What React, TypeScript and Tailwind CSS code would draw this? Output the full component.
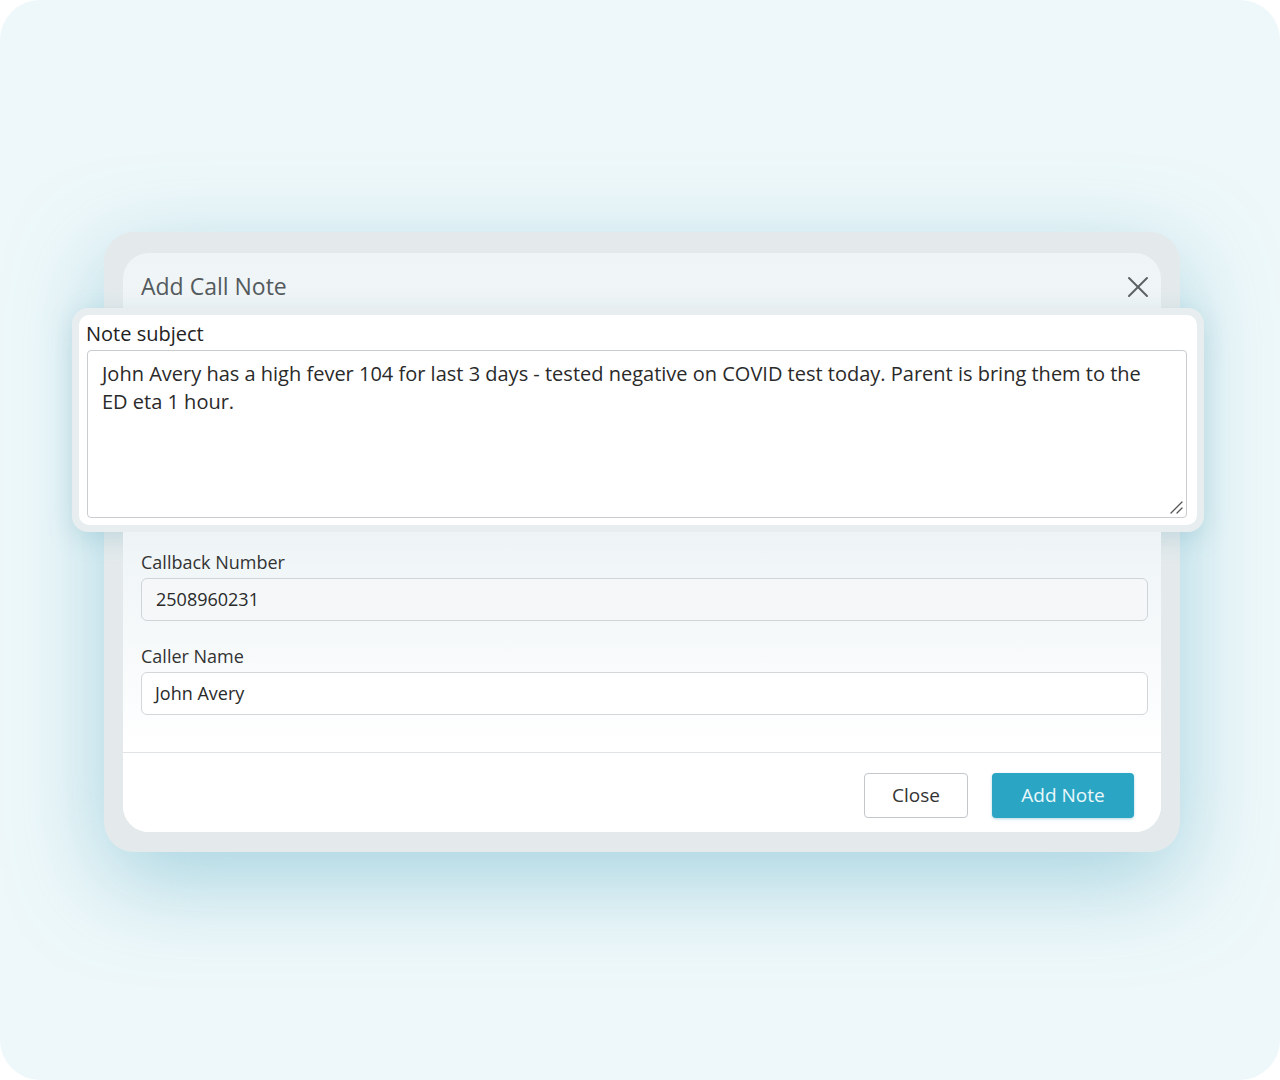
import React from 'react';

const font = { fontFamily: '"Open Sans", "Noto Sans", sans-serif' };

export default function App() {
  return (
    <div className="w-[1280px] h-[1080px] bg-white" style={font}>
      <div className="w-full h-full rounded-[40px] bg-[#eef8fa] pt-[232px] pl-[104px] overflow-hidden">
        {/* Outer frame with glow */}
        <div className="w-[1076px] rounded-[30px] bg-[#e4eaec] pt-[21px] px-[19px] pb-[20px] shadow-[0_28px_90px_rgba(95,175,200,0.5)]">
          {/* Modal */}
          <div className="rounded-[26px] bg-gradient-to-b from-[#eff4f6] via-[#f7fafb] to-white">
            {/* Header */}
            <div className="h-[55px] pt-[16px] pl-[18px] pr-[11px] flex items-start justify-between">
              <h2 className="text-[23px] leading-[34px] text-[#545a5d]">Add Call Note</h2>
              <button className="mt-[6px] w-[24px] h-[24px] flex items-center justify-center text-[#5b6063]">
                <svg width="22" height="22" viewBox="0 0 22 22" fill="none" stroke="currentColor" strokeWidth="2" strokeLinecap="round">
                  <path d="M2 2 L20 20" />
                  <path d="M20 2 L2 20" />
                </svg>
              </button>
            </div>

            {/* Popped-out note subject */}
            <div className="ml-[-51px] mr-[-43px] rounded-[16px] bg-[#e8eef0] p-[7px] shadow-[0_6px_24px_rgba(90,160,180,0.25)]">
              <div className="rounded-[10px] bg-white pl-[7px] pr-[10px] pt-[5px] pb-[7px]">
                <label className="block text-[20px] leading-[28px] text-[#222]">Note subject</label>
                <div className="relative mt-[2px] ml-[1px] h-[168px] rounded-[4px] border border-[#c9cdd0] px-[14px] pt-[9px] text-[20px] leading-[28px] text-[#2a2a2a]">
                  <div>John Avery has a high fever 104 for last 3 days - tested negative on COVID test today. Parent is bring them to the</div>
                  <div>ED eta 1 hour.</div>
                  <svg className="absolute right-[3px] bottom-[3px]" width="14" height="14" viewBox="0 0 14 14" stroke="#555" strokeWidth="1.3" strokeLinecap="round">
                    <path d="M2 13 L13 2" />
                    <path d="M8 13 L13 8" />
                  </svg>
                </div>
              </div>
            </div>

            {/* Fields */}
            <div className="pl-[18px] pr-[13px] pt-[18px] pb-[37px] bg-gradient-to-b from-[#eef4f6] to-white">
              <label className="block text-[18px] leading-[24px] text-[#333]">Callback Number</label>
              <div className="mt-[4px] h-[43px] rounded-[6px] border border-[#cfd4d7] bg-[#f5f7f8] px-[14px] flex items-center text-[18px] text-[#2a2a2a]">
                2508960231
              </div>
              <label className="block mt-[23px] text-[18px] leading-[24px] text-[#333]">Caller Name</label>
              <div className="mt-[4px] h-[43px] rounded-[6px] border border-[#d3d7da] bg-white px-[13px] flex items-center text-[18px] text-[#2a2a2a]">
                John Avery
              </div>
            </div>

            {/* Footer */}
            <div className="border-t border-[#dfe3e5] bg-white rounded-b-[26px] pt-[20px] pb-[14px] pr-[27px] flex justify-end gap-[24px]">
              <button className="w-[104px] h-[45px] rounded-[4px] border border-[#c3c7ca] bg-white text-[19px] text-[#333]">
                Close
              </button>
              <button className="w-[142px] h-[45px] rounded-[4px] bg-[#2aa6c4] text-[19px] text-[#eaf8fb] shadow-[0_1px_3px_rgba(40,140,170,0.35)]">
                Add Note
              </button>
            </div>
          </div>
        </div>
      </div>
    </div>
  );
}
